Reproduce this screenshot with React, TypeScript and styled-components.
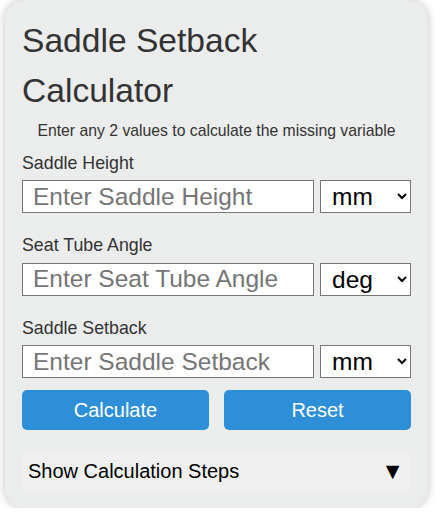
import { FC, useState } from 'react';
import styled, { createGlobalStyle } from 'styled-components';

const GlobalStyle = createGlobalStyle`
  body {
    margin: 0;
    background: #ffffff;
    font-family: "Liberation Sans", Arial, sans-serif;
  }
`;

interface FieldDef {
  label: string;
  placeholder: string;
  units: string[];
}

const FIELDS: FieldDef[] = [
  { label: 'Saddle Height', placeholder: 'Enter Saddle Height', units: ['mm', 'cm', 'in'] },
  { label: 'Seat Tube Angle', placeholder: 'Enter Seat Tube Angle', units: ['deg', 'rad'] },
  { label: 'Saddle Setback', placeholder: 'Enter Saddle Setback', units: ['mm', 'cm', 'in'] },
];

const App: FC = () => {
  const [values, setValues] = useState<string[]>(['', '', '']);

  const update = (i: number, v: string) => {
    const next = [...values];
    next[i] = v;
    setValues(next);
  };

  return (
    <>
      <GlobalStyle />
      <Card>
        <Title>Saddle Setback Calculator</Title>
        <Hint>Enter any 2 values to calculate the missing variable</Hint>
        {FIELDS.map((f, i) => (
          <Field key={f.label} first={i === 0}>
            <Label>{f.label}</Label>
            <InputRow>
              <ValueInput
                type="number"
                placeholder={f.placeholder}
                value={values[i]}
                onChange={e => update(i, e.target.value)}
              />
              <UnitSelect defaultValue={f.units[0]}>
                {f.units.map(u => (
                  <option key={u} value={u}>{u}</option>
                ))}
              </UnitSelect>
            </InputRow>
          </Field>
        ))}
        <Buttons>
          <ActionButton>Calculate</ActionButton>
          <ActionButton onClick={() => setValues(['', '', ''])}>Reset</ActionButton>
        </Buttons>
        <Steps>
          <StepsSummary>
            <span>Show Calculation Steps</span>
            <Arrow>▼</Arrow>
          </StepsSummary>
        </Steps>
      </Card>
    </>
  );
};

export default App;

const Card = styled.div`
  box-sizing: border-box;
  width: 423px;
  margin-left: 5px;
  padding: 16px 17px 16px;
  background: #ebecec;
  border-radius: 20px;
  box-shadow: 0 0 10px rgba(0, 0, 0, 0.25);
  color: #333333;
`;

const Title = styled.h1`
  margin: 0;
  font-size: 33.6px;
  line-height: 1.5;
  font-weight: normal;
  color: #333333;
`;

const Hint = styled.p`
  margin: 5px 0 0;
  font-size: 15.75px;
  text-align: center;
  color: #333333;
`;

const Field = styled.div<{ first: boolean }>`
  margin-top: ${props => (props.first ? '13px' : '22px')};
`;

const Label = styled.label`
  display: block;
  margin-bottom: 6.5px;
  font-size: 17.8px;
  color: #333333;
`;

const InputRow = styled.div`
  display: flex;
  gap: 6px;
`;

const ValueInput = styled.input`
  box-sizing: border-box;
  flex: 1;
  min-width: 0;
  height: 33px;
  padding: 0 10px;
  border: 1px solid #767676;
  border-radius: 0;
  background: #ffffff;
  font-family: inherit;
  font-size: 24.5px;
  color: #000000;
  &::placeholder {
    color: #757575;
  }
  &::-webkit-outer-spin-button,
  &::-webkit-inner-spin-button {
    -webkit-appearance: none;
    margin: 0;
  }
`;

const UnitSelect = styled.select`
  box-sizing: border-box;
  width: 91px;
  height: 33px;
  padding: 0 4px 0 7px;
  border: 1px solid #767676;
  border-radius: 0;
  background: #ffffff;
  font-family: inherit;
  font-size: 24.5px;
  color: #000000;
`;

const Buttons = styled.div`
  display: grid;
  grid-template-columns: 1fr 1fr;
  gap: 15px;
  margin-top: 12px;
`;

const ActionButton = styled.button`
  height: 39.5px;
  border: none;
  border-radius: 5px;
  background: #2e8fd9;
  color: #ffffff;
  font-family: inherit;
  font-size: 20px;
  cursor: pointer;
`;

const Steps = styled.details`
  margin-top: 22px;
`;

const StepsSummary = styled.summary`
  display: flex;
  align-items: center;
  justify-content: space-between;
  height: 40px;
  padding: 0 7px 0 6px;
  border-radius: 5px;
  background: #f0f0f0;
  list-style: none;
  font-size: 20px;
  color: #000000;
  cursor: pointer;
  &::-webkit-details-marker {
    display: none;
  }
`;

const Arrow = styled.span`
  font-size: 23px;
`;
